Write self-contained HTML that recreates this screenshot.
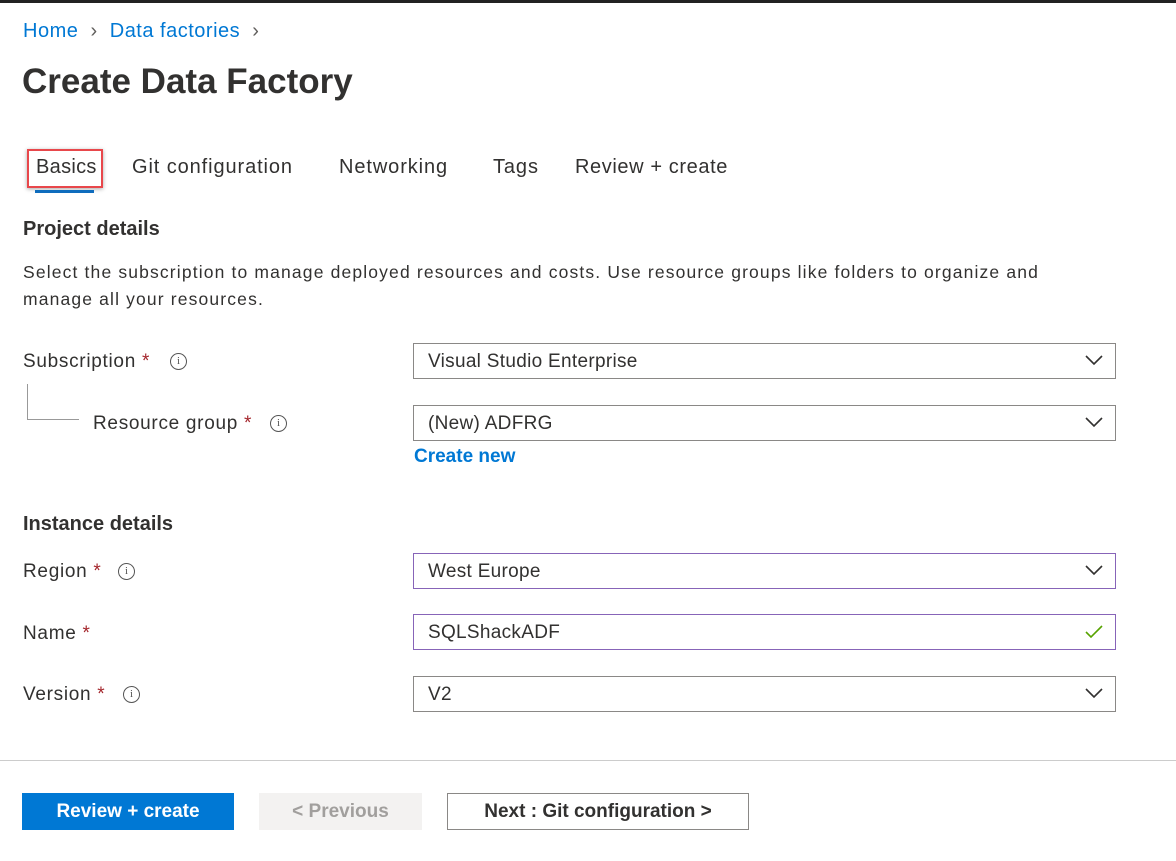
<!DOCTYPE html>
<html><head><style>
body{margin:0;width:1176px;height:861px;background:#fff;font-family:"Liberation Sans",sans-serif;color:#323130;position:relative;overflow:hidden}
.a{position:absolute;white-space:nowrap}
.l{font-size:19px;letter-spacing:0.7px}
.t{font-size:20px;letter-spacing:0.9px}
.req{color:#a4262c}
.info{position:absolute;width:15px;height:15px;border:1.3px solid #555;border-radius:50%;font-size:11px;text-align:center;line-height:15px;color:#555;font-family:"Liberation Serif",serif}
.box{position:absolute;left:413px;height:36px;border:1px solid #8a8886;font-size:19px;letter-spacing:0.3px;line-height:36px;padding-left:14px;box-sizing:border-box;width:703px}
.chev{position:absolute;right:12px;top:11px}
</style></head><body>
<div class="a" style="left:0;top:0;width:1176px;height:3px;background:#222"></div>
<div class="a" style="left:23px;top:20px;font-size:20px;letter-spacing:0.5px;color:#0078d4">Home <span style="color:#605e5c">&nbsp;›&nbsp;</span> Data factories <span style="color:#605e5c">&nbsp;›</span></div>
<div class="a" style="left:22px;top:62px;font-size:35px;font-weight:600;color:#323130">Create Data Factory</div>
<div class="a" style="left:27px;top:149px;width:72px;height:35px;border:2px solid #e8474b;box-shadow:0 1px 4px rgba(0,0,0,.35)"></div>
<div class="a" style="left:35px;top:190px;width:59px;height:3px;background:#0f6cbd"></div>
<div class="a t" style="left:36px;top:156px;letter-spacing:0.3px">Basics</div>
<div class="a t" style="left:132px;top:156px">Git configuration</div>
<div class="a t" style="left:339px;top:156px">Networking</div>
<div class="a t" style="left:493px;top:156px">Tags</div>
<div class="a t" style="left:575px;top:156px;letter-spacing:0.6px">Review + create</div>
<div class="a" style="left:23px;top:218px;font-size:20px;font-weight:600">Project details</div>
<div class="a" style="left:23px;top:259px;font-size:17.5px;letter-spacing:1.15px;line-height:27px">Select the subscription to manage deployed resources and costs. Use resource groups like folders to organize and<br>manage all your resources.</div>
<div class="a l" style="left:23px;top:351px">Subscription <span class="req">*</span></div><div class="info" style="left:170px;top:353px">i</div>
<div class="a" style="left:27px;top:384px;width:51px;height:35px;border-left:1px solid #999;border-bottom:1px solid #999"></div>
<div class="a l" style="left:93px;top:413px">Resource group <span class="req">*</span></div><div class="info" style="left:270px;top:415px">i</div>
<div class="box" style="top:343px">Visual Studio Enterprise<svg class="chev" width="18" height="11"><path d="M1 1l8 8 8-8" stroke="#323130" stroke-width="1.6" fill="none"/></svg></div>
<div class="box" style="top:405px">(New) ADFRG<svg class="chev" width="18" height="11"><path d="M1 1l8 8 8-8" stroke="#323130" stroke-width="1.6" fill="none"/></svg></div>
<div class="a" style="left:414px;top:446px;font-size:19px;font-weight:600;color:#0078d4">Create new</div>
<div class="a" style="left:23px;top:513px;font-size:20px;font-weight:600">Instance details</div>
<div class="a l" style="left:23px;top:561px">Region <span class="req">*</span></div><div class="info" style="left:118px;top:563px">i</div>
<div class="a l" style="left:23px;top:623px">Name <span class="req">*</span></div>
<div class="a l" style="left:23px;top:684px">Version <span class="req">*</span></div><div class="info" style="left:123px;top:686px">i</div>
<div class="box" style="top:553px;border-color:#8764b8">West Europe<svg class="chev" width="18" height="11"><path d="M1 1l8 8 8-8" stroke="#323130" stroke-width="1.6" fill="none"/></svg></div>
<div class="box" style="top:614px;border-color:#8764b8">SQLShackADF<svg class="chev" style="top:10px" width="18" height="14"><path d="M1 7l5 5 11-11" stroke="#57a300" stroke-width="1.6" fill="none"/></svg></div>
<div class="box" style="top:676px">V2<svg class="chev" width="18" height="11"><path d="M1 1l8 8 8-8" stroke="#323130" stroke-width="1.6" fill="none"/></svg></div>
<div class="a" style="left:0;top:760px;width:1176px;height:1px;background:#ccc"></div>
<div class="a" style="left:22px;top:793px;width:212px;height:37px;background:#0078d4;color:#fff;font-size:19px;font-weight:600;text-align:center;line-height:37px">Review + create</div>
<div class="a" style="left:259px;top:793px;width:163px;height:37px;background:#f3f2f1;color:#a19f9d;font-size:19px;font-weight:600;text-align:center;line-height:37px">&lt; Previous</div>
<div class="a" style="left:447px;top:793px;width:302px;height:37px;border:1px solid #8a8886;box-sizing:border-box;font-size:19px;font-weight:600;text-align:center;line-height:35px">Next : Git configuration &gt;</div>
</body></html>
